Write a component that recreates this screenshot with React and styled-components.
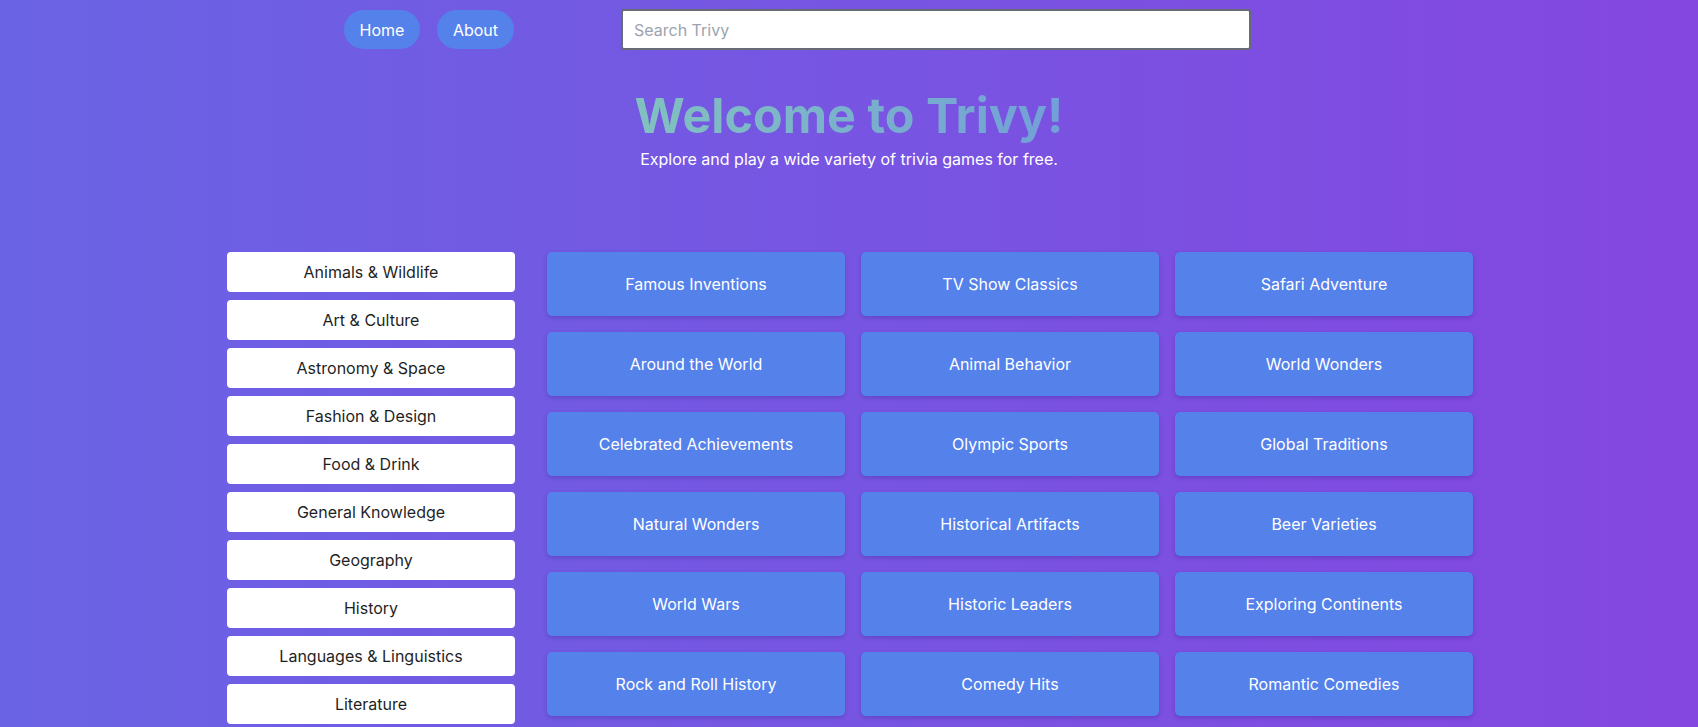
import React from "react";
import styled, { createGlobalStyle } from "styled-components";

const Global = createGlobalStyle`
  html, body { margin: 0; padding: 0; }
  body {
    font-family: Inter, "Noto Sans", sans-serif;
    background: linear-gradient(to right, #6a63e4, #8447e0);
    min-height: 100vh;
  }
  * { box-sizing: border-box; }
`;

const Page = styled.div`
  min-height: 100vh;
  overflow: hidden;
`;

const Header = styled.header`
  display: flex;
  align-items: center;
  padding: 9px 0 0 344px;
  height: 50px;
`;

const NavLinks = styled.nav`
  display: flex;
  gap: 17px;
`;

const NavButton = styled.a`
  display: inline-flex;
  align-items: center;
  justify-content: center;
  height: 39px;
  width: ${(p) => p.$w}px;
  border-radius: 999px;
  background: #5581eb;
  color: #ffffff;
  font-size: 16px;
  text-decoration: none;
  cursor: pointer;
`;

const Search = styled.input`
  margin-left: 107px;
  width: 630px;
  height: 41px;
  border: 2px solid #676b74;
  border-radius: 3px;
  padding: 0 11px;
  font-family: Inter, "Noto Sans", sans-serif;
  font-size: 16px;
  color: #222;
  background: #fff;
  outline: none;
  &::placeholder { color: #9ca3af; }
`;

const Hero = styled.section`
  display: flex;
  flex-direction: column;
  align-items: center;
  padding-top: 38px;
`;

const Title = styled.h1`
  margin: 0;
  font-size: 48.5px;
  line-height: 56px;
  font-weight: 700;
  background: linear-gradient(to right, #82c1c0, #72a0d8);
  -webkit-background-clip: text;
  background-clip: text;
  color: transparent;
`;

const Subtitle = styled.p`
  margin: 3px 0 0;
  font-size: 16px;
  line-height: 24px;
  color: #ffffff;
`;

const Main = styled.main`
  width: 1248px;
  margin: 81px 0 0 calc(50% - 622px);
  display: flex;
  gap: 32px;
  align-items: flex-start;
`;

const Sidebar = styled.aside`
  width: 288px;
  flex-shrink: 0;
  display: flex;
  flex-direction: column;
  gap: 8px;
`;

const CategoryButton = styled.button`
  height: 40px;
  border: none;
  border-radius: 4px;
  background: #ffffff;
  color: #1f1f1f;
  font-family: Inter, "Noto Sans", sans-serif;
  font-size: 16px;
  cursor: pointer;
`;

const Grid = styled.div`
  flex: 1;
  display: grid;
  grid-template-columns: repeat(3, 298px);
  column-gap: 16px;
  row-gap: 16px;
`;

const Tile = styled.div`
  height: 64px;
  border-radius: 5px;
  background: #5581eb;
  color: #ffffff;
  font-size: 16px;
  display: flex;
  align-items: center;
  justify-content: center;
  box-shadow: 0 2px 4px rgba(40, 20, 120, 0.25);
  cursor: pointer;
`;

const categories = [
  "Animals & Wildlife",
  "Art & Culture",
  "Astronomy & Space",
  "Fashion & Design",
  "Food & Drink",
  "General Knowledge",
  "Geography",
  "History",
  "Languages & Linguistics",
  "Literature",
];

const games = [
  "Famous Inventions", "TV Show Classics", "Safari Adventure",
  "Around the World", "Animal Behavior", "World Wonders",
  "Celebrated Achievements", "Olympic Sports", "Global Traditions",
  "Natural Wonders", "Historical Artifacts", "Beer Varieties",
  "World Wars", "Historic Leaders", "Exploring Continents",
  "Rock and Roll History", "Comedy Hits", "Romantic Comedies",
];

export default function App() {
  return (
    <Page>
      <Global />
      <Header>
        <NavLinks>
          <NavButton $w={76}>Home</NavButton>
          <NavButton $w={77}>About</NavButton>
        </NavLinks>
        <Search placeholder="Search Trivy" />
      </Header>
      <Hero>
        <Title>Welcome to Trivy!</Title>
        <Subtitle>Explore and play a wide variety of trivia games for free.</Subtitle>
      </Hero>
      <Main>
        <Sidebar>
          {categories.map((c) => (
            <CategoryButton key={c}>{c}</CategoryButton>
          ))}
        </Sidebar>
        <Grid>
          {games.map((g) => (
            <Tile key={g}>{g}</Tile>
          ))}
        </Grid>
      </Main>
    </Page>
  );
}
